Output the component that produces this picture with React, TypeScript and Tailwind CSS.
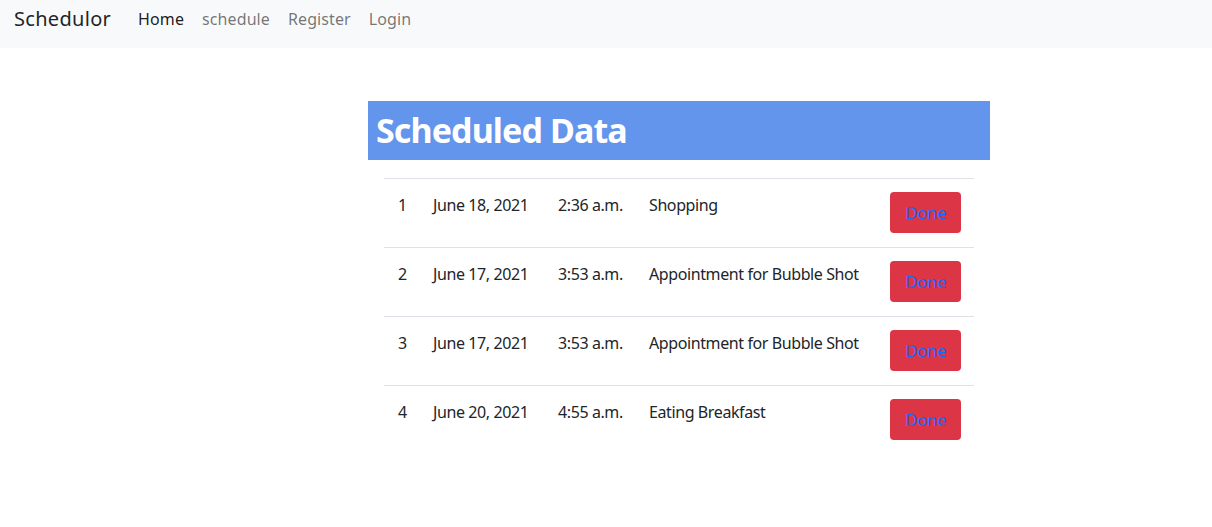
const rows = [
  { id: 1, date: 'June 18, 2021', time: '2:36 a.m.', title: 'Shopping' },
  { id: 2, date: 'June 17, 2021', time: '3:53 a.m.', title: 'Appointment for Bubble Shot' },
  { id: 3, date: 'June 17, 2021', time: '3:53 a.m.', title: 'Appointment for Bubble Shot' },
  { id: 4, date: 'June 20, 2021', time: '4:55 a.m.', title: 'Eating Breakfast' },
]

export default function App() {
  return (
    <div className="min-h-screen bg-white text-[#212529] font-['Noto_Sans',sans-serif]">
      {/* Navbar */}
      <nav className="h-12 bg-[#f8f9fa] flex items-start pt-[4px] px-[14px]">
        <span className="text-[20px] leading-[30px] mr-[27px] tracking-[0.3px]">Schedulor</span>
        <div className="flex gap-[18px] text-[16px] leading-[30px] tracking-[0.1px]">
          <a className="text-black/90">Home</a>
          <a className="text-black/55">schedule</a>
          <a className="text-black/55">Register</a>
          <a className="text-black/55">Login</a>
        </div>
      </nav>

      <div className="flex justify-center mt-[53px] pl-[146px]">
        <div className="w-[622px]">
          <h1 className="h-[59px] bg-[#6495ed] text-white font-bold text-[34px] flex items-center px-2 tracking-[-0.9px]">
            Scheduled Data
          </h1>

          <div className="mx-4 mt-[18px]">
            {rows.map((r) => (
              <div key={r.id} className="flex h-[69px] border-t border-[#dee2e6] text-[16px] tracking-[-0.4px]">
                <div className="w-[35px] pl-[14px] pt-[14px]">{r.id}</div>
                <div className="w-[125px] pl-[14px] pt-[14px]">{r.date}</div>
                <div className="w-[91px] pl-[14px] pt-[14px]">{r.time}</div>
                <div className="flex-1 pl-[14px] pt-[14px]">{r.title}</div>
                <div className="w-[98px] pl-[14px] pt-[13px]">
                  <button className="w-[71px] h-[41px] rounded-[4px] bg-[#dc3545] text-[#0d6efd] text-[17px]">
                    Done
                  </button>
                </div>
              </div>
            ))}
          </div>
        </div>
      </div>
    </div>
  )
}
